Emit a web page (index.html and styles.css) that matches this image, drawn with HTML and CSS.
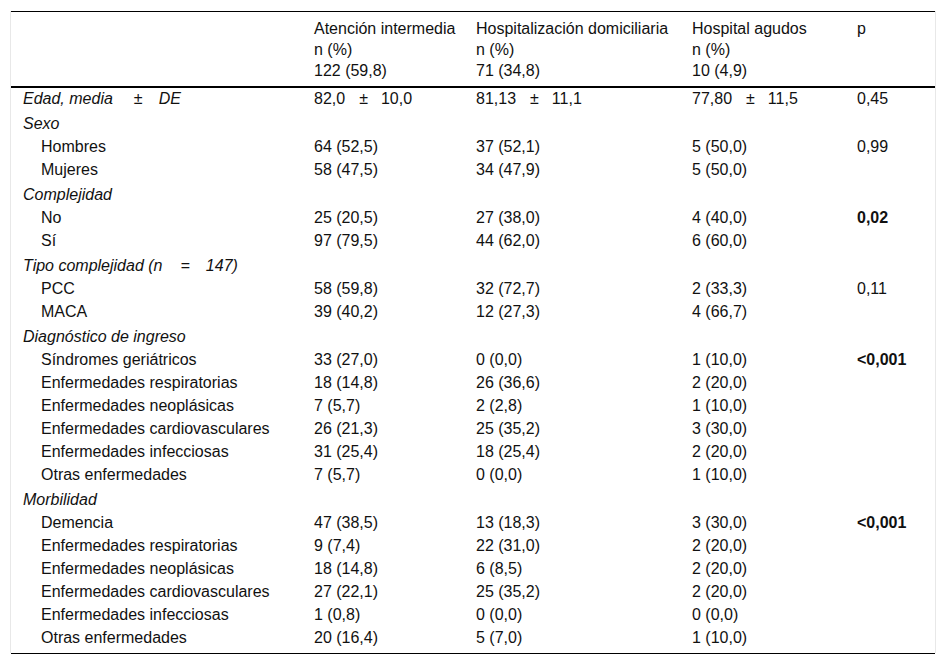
FILE: index.html
```html
<!DOCTYPE html>
<html lang="es">
<head>
<meta charset="utf-8">
<title>Tabla</title>
<link rel="stylesheet" href="styles.css">
</head>
<body>
<div class="wrap">
<table class="data">
  <colgroup>
    <col class="c1"><col class="c2"><col class="c3"><col class="c4"><col class="c5">
  </colgroup>
  <thead>
    <tr>
      <th></th>
      <th>Atención intermedia<br>n (%)<br>122 (59,8)</th>
      <th>Hospitalización domiciliaria<br>n (%)<br>71 (34,8)</th>
      <th>Hospital agudos<br>n (%)<br>10 (4,9)</th>
      <th>p</th>
    </tr>
  </thead>
  <tbody>
    <tr class="first">
      <td><em>Edad, media<span class="pmw">±</span>DE</em></td>
      <td>82,0<span class="pm">±</span>10,0</td>
      <td>81,13<span class="pm">±</span>11,1</td>
      <td>77,80<span class="pm">±</span>11,5</td>
      <td>0,45</td>
    </tr>
    <tr class="cat"><td><em>Sexo</em></td><td></td><td></td><td></td><td></td></tr>
    <tr><td class="ind">Hombres</td><td>64 (52,5)</td><td>37 (52,1)</td><td>5 (50,0)</td><td>0,99</td></tr>
    <tr><td class="ind">Mujeres</td><td>58 (47,5)</td><td>34 (47,9)</td><td>5 (50,0)</td><td></td></tr>
    <tr class="cat"><td><em>Complejidad</em></td><td></td><td></td><td></td><td></td></tr>
    <tr><td class="ind">No</td><td>25 (20,5)</td><td>27 (38,0)</td><td>4 (40,0)</td><td><strong>0,02</strong></td></tr>
    <tr><td class="ind">Sí</td><td>97 (79,5)</td><td>44 (62,0)</td><td>6 (60,0)</td><td></td></tr>
    <tr class="cat"><td><em>Tipo complejidad (n<span class="eq">=</span>147)</em></td><td></td><td></td><td></td><td></td></tr>
    <tr><td class="ind">PCC</td><td>58 (59,8)</td><td>32 (72,7)</td><td>2 (33,3)</td><td>0,11</td></tr>
    <tr><td class="ind">MACA</td><td>39 (40,2)</td><td>12 (27,3)</td><td>4 (66,7)</td><td></td></tr>
    <tr class="cat"><td><em>Diagnóstico de ingreso</em></td><td></td><td></td><td></td><td></td></tr>
    <tr><td class="ind">Síndromes geriátricos</td><td>33 (27,0)</td><td>0 (0,0)</td><td>1 (10,0)</td><td><strong>&lt;0,001</strong></td></tr>
    <tr><td class="ind">Enfermedades respiratorias</td><td>18 (14,8)</td><td>26 (36,6)</td><td>2 (20,0)</td><td></td></tr>
    <tr><td class="ind">Enfermedades neoplásicas</td><td>7 (5,7)</td><td>2 (2,8)</td><td>1 (10,0)</td><td></td></tr>
    <tr><td class="ind">Enfermedades cardiovasculares</td><td>26 (21,3)</td><td>25 (35,2)</td><td>3 (30,0)</td><td></td></tr>
    <tr><td class="ind">Enfermedades infecciosas</td><td>31 (25,4)</td><td>18 (25,4)</td><td>2 (20,0)</td><td></td></tr>
    <tr><td class="ind">Otras enfermedades</td><td>7 (5,7)</td><td>0 (0,0)</td><td>1 (10,0)</td><td></td></tr>
    <tr class="cat"><td><em>Morbilidad</em></td><td></td><td></td><td></td><td></td></tr>
    <tr><td class="ind">Demencia</td><td>47 (38,5)</td><td>13 (18,3)</td><td>3 (30,0)</td><td><strong>&lt;0,001</strong></td></tr>
    <tr><td class="ind">Enfermedades respiratorias</td><td>9 (7,4)</td><td>22 (31,0)</td><td>2 (20,0)</td><td></td></tr>
    <tr><td class="ind">Enfermedades neoplásicas</td><td>18 (14,8)</td><td>6 (8,5)</td><td>2 (20,0)</td><td></td></tr>
    <tr><td class="ind">Enfermedades cardiovasculares</td><td>27 (22,1)</td><td>25 (35,2)</td><td>2 (20,0)</td><td></td></tr>
    <tr><td class="ind">Enfermedades infecciosas</td><td>1 (0,8)</td><td>0 (0,0)</td><td>0 (0,0)</td><td></td></tr>
    <tr><td class="ind">Otras enfermedades</td><td>20 (16,4)</td><td>5 (7,0)</td><td>1 (10,0)</td><td></td></tr>
  </tbody>
</table>
</div>
<div class="rule"></div>
</body>
</html>
```
FILE: styles.css
```css
html, body {
  margin: 0;
  padding: 0;
  background: #fff;
}
body {
  font-family: "Liberation Sans", Arial, sans-serif;
  font-size: 16px;
  color: #111;
}
.wrap {
  margin: 11px 0 0 10px;
  width: 924px;
  border-left: 1px solid #e8e8e8;
  border-right: 1px solid #e8e8e8;
  padding-bottom: 4px;
}
.data {
  width: 924px;
  border-collapse: collapse;
  table-layout: fixed;
  border-top: 1px solid #000;
}
.c1 { width: 291px; }
.c2 { width: 162px; }
.c3 { width: 216px; }
.c4 { width: 165px; }
.c5 { width: 90px; }
.data th {
  text-align: left;
  vertical-align: top;
  font-weight: normal;
  line-height: 21px;
  padding: 6px 0 5px 12px;
  border-bottom: 2px solid #000;
  white-space: nowrap;
}
.data td {
  text-align: left;
  vertical-align: top;
  line-height: 19px;
  padding: 2px 0 2px 12px;
  white-space: nowrap;
}
.data tr.first td {
  padding-top: 1px;
  padding-bottom: 2px;
}
.data tr.cat td {
  padding-top: 4px;
  padding-bottom: 2px;
}
.data td.ind {
  padding-left: 30px;
}
.data strong {
  font-weight: bold;
}
.pm {
  margin: 0 13px 0 14px;
}
.pmw {
  margin: 0 16px 0 21px;
}
.eq {
  margin: 0 16px 0 18px;
}
.rule {
  margin: 0 0 0 11px;
  width: 924px;
  border-top: 1px solid #000;
}
```
